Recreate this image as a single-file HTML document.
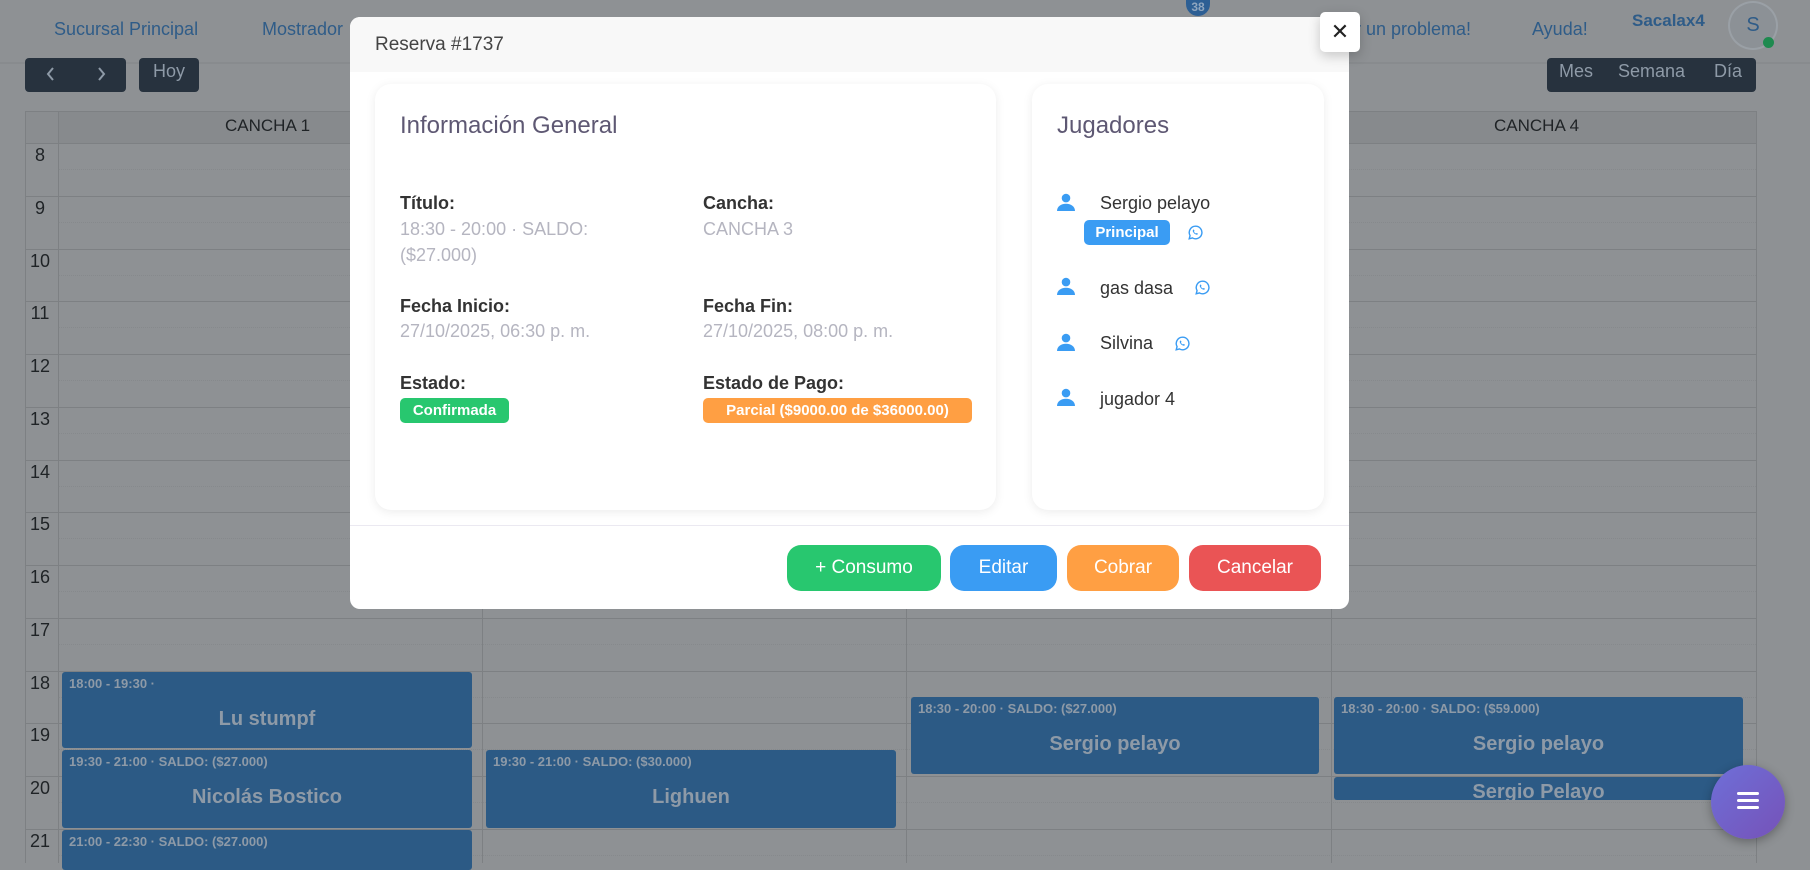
<!DOCTYPE html>
<html><head><meta charset="utf-8"><style>
*{margin:0;padding:0;box-sizing:border-box}
body{width:1810px;height:863px;overflow:hidden;background:#8e9194;font-family:"Liberation Sans",sans-serif;position:relative;color:#1f2326}
.a{position:absolute;white-space:nowrap}
.nav{color:#2f5c88;font-size:18px}
.hr{position:absolute;left:25px;width:1731px;height:1px;background:#7d8083}
.hh{position:absolute;left:58px;width:1698px;border-top:1px dotted #80838688}
.vl{position:absolute;top:111px;bottom:0;width:1px;background:#7d8083}
.hn{position:absolute;left:25px;width:30px;text-align:center;font-size:18px;color:#1f2326}
.ev{position:absolute;background:#2c5a85;border-radius:3px;color:#8e9aa7}
.ev .t{position:absolute;left:7px;top:4px;font-size:13px;font-weight:bold}
.ev .n{position:absolute;left:0;right:0;top:36px;text-align:center;font-size:20px;font-weight:bold}
.modal{position:absolute;left:350px;top:17px;width:999px;height:592px;background:#fff;border-radius:10px;overflow:hidden}
.card{position:absolute;background:#fff;border-radius:16px;box-shadow:0 2px 10px rgba(0,0,0,.08)}
.lb{position:absolute;font-size:18px;color:#333;font-weight:bold}
.vv{position:absolute;font-size:18px;color:#b5b5c0;line-height:26px}
.bd{position:absolute;color:#fff;font-weight:bold;font-size:15px;border-radius:5px;text-align:center;line-height:25px}
.btn{position:absolute;top:528px;height:46px;border-radius:14px;color:#fff;font-size:19px;text-align:center;line-height:46px}
.pn{position:absolute;left:1100px;font-size:18px;color:#333}
.tb{position:absolute;top:61px;color:#8e9aa7;font-size:18px}
</style></head><body>
<!-- nav -->
<div class="a nav" style="left:54px;top:19px">Sucursal Principal</div>
<div class="a nav" style="left:262px;top:19px">Mostrador</div>
<div class="a nav" style="left:1355px;top:19px">r un problema!</div>
<div class="a nav" style="left:1532px;top:19px">Ayuda!</div>
<div class="a" style="left:1632px;top:11px;font-size:17px;font-weight:bold;color:#2f5c88">Sacalax4</div>
<div class="a" style="left:1186px;top:0;width:24px;height:16px;border-radius:0 0 12px 12px;background:#2d5f94;color:#8fa6bf;font-size:12px;font-weight:bold;text-align:center;line-height:14px">38</div>
<div class="a" style="left:1728px;top:1px;width:50px;height:49px;border-radius:50%;background:#8c9196;border:2px solid #9aa0a6;color:#2f5c88;font-size:20px;text-align:center;line-height:45px">S</div>
<div class="a" style="left:1763px;top:37px;width:11px;height:11px;border-radius:50%;background:#1e8a4f"></div>
<div class="a" style="left:0;top:62px;width:1810px;height:2px;background:#888b8e"></div>
<!-- toolbar -->
<div class="a" style="left:25px;top:58px;width:101px;height:34px;background:#27323e;border-radius:4px"></div>
<svg class="a" style="left:44px;top:65px" width="14" height="18" viewBox="0 0 14 18"><path d="M9 3L4 9l5 6" fill="none" stroke="#8e9aa7" stroke-width="2"/></svg>
<svg class="a" style="left:94px;top:65px" width="14" height="18" viewBox="0 0 14 18"><path d="M5 3l5 6-5 6" fill="none" stroke="#8e9aa7" stroke-width="2"/></svg>
<div class="a" style="left:139px;top:58px;width:60px;height:34px;background:#27323e;border-radius:4px;color:#8e9aa7;font-size:18px;text-align:center;line-height:26px">Hoy</div>
<div class="a" style="left:1547px;top:58px;width:209px;height:34px;background:#27323e;border-radius:4px"></div>
<div class="tb" style="left:1559px">Mes</div><div class="tb" style="left:1618px">Semana</div><div class="tb" style="left:1714px">Día</div>
<!-- grid -->
<div class="a" style="left:58px;top:111px;width:1698px;height:32px;background:#878a8d"></div>
<div class="a" style="left:25px;top:111px;width:33px;height:32px;background:#8a8d90"></div>
<div class="a" style="left:225px;top:116px;font-size:17px">CANCHA 1</div>
<div class="a" style="left:1494px;top:116px;font-size:17px">CANCHA 4</div>
<div class="hr" style="top:111px"></div>
<div class="vl" style="left:25px"></div><div class="vl" style="left:58px"></div><div class="vl" style="left:482px"></div><div class="vl" style="left:906px"></div><div class="vl" style="left:1331px"></div><div class="vl" style="left:1756px"></div>
<div class="hr" style="top:143px"></div><div class="hh" style="top:169px"></div><div class="hn" style="top:145px">8</div>
<div class="hr" style="top:196px"></div><div class="hh" style="top:222px"></div><div class="hn" style="top:198px">9</div>
<div class="hr" style="top:249px"></div><div class="hh" style="top:275px"></div><div class="hn" style="top:251px">10</div>
<div class="hr" style="top:301px"></div><div class="hh" style="top:327px"></div><div class="hn" style="top:303px">11</div>
<div class="hr" style="top:354px"></div><div class="hh" style="top:380px"></div><div class="hn" style="top:356px">12</div>
<div class="hr" style="top:407px"></div><div class="hh" style="top:433px"></div><div class="hn" style="top:409px">13</div>
<div class="hr" style="top:460px"></div><div class="hh" style="top:486px"></div><div class="hn" style="top:462px">14</div>
<div class="hr" style="top:512px"></div><div class="hh" style="top:538px"></div><div class="hn" style="top:514px">15</div>
<div class="hr" style="top:565px"></div><div class="hh" style="top:591px"></div><div class="hn" style="top:567px">16</div>
<div class="hr" style="top:618px"></div><div class="hh" style="top:644px"></div><div class="hn" style="top:620px">17</div>
<div class="hr" style="top:671px"></div><div class="hh" style="top:697px"></div><div class="hn" style="top:673px">18</div>
<div class="hr" style="top:723px"></div><div class="hh" style="top:749px"></div><div class="hn" style="top:725px">19</div>
<div class="hr" style="top:776px"></div><div class="hh" style="top:802px"></div><div class="hn" style="top:778px">20</div>
<div class="hr" style="top:829px"></div><div class="hh" style="top:855px"></div><div class="hn" style="top:831px">21</div>
<!-- events -->
<div class="ev" style="left:62px;top:672px;width:410px;height:76px"><div class="t">18:00 - 19:30 ·</div><div class="n">Lu stumpf</div></div>
<div class="ev" style="left:62px;top:750px;width:410px;height:78px"><div class="t">19:30 - 21:00 · SALDO: ($27.000)</div><div class="n">Nicolás Bostico</div></div>
<div class="ev" style="left:62px;top:830px;width:410px;height:40px"><div class="t">21:00 - 22:30 · SALDO: ($27.000)</div></div>
<div class="ev" style="left:486px;top:750px;width:410px;height:78px"><div class="t">19:30 - 21:00 · SALDO: ($30.000)</div><div class="n">Lighuen</div></div>
<div class="ev" style="left:911px;top:697px;width:408px;height:77px"><div class="t">18:30 - 20:00 · SALDO: ($27.000)</div><div class="n">Sergio pelayo</div></div>
<div class="ev" style="left:1334px;top:697px;width:409px;height:77px"><div class="t">18:30 - 20:00 · SALDO: ($59.000)</div><div class="n">Sergio pelayo</div></div>
<div class="ev" style="left:1334px;top:777px;width:409px;height:23px;overflow:hidden"><div class="n" style="top:4px">Sergio Pelayo</div></div>
<!-- fab -->
<div class="a" style="left:1711px;top:765px;width:74px;height:74px;border-radius:50%;background:linear-gradient(135deg,#6e6fd8,#7652b8);box-shadow:0 3px 10px rgba(0,0,0,.3)"></div>
<div class="a" style="left:1737px;top:792px;width:22px;height:3px;background:#fff;border-radius:2px;box-shadow:0 7px 0 #fff,0 14px 0 #fff"></div>
<!-- modal -->
<div class="modal">
 <div class="a" style="left:0;top:0;width:999px;height:55px;background:#f8f8f8"></div>
 <div class="a" style="left:25px;top:17px;font-size:19px;color:#444">Reserva #1737</div>
 <div class="card" style="left:25px;top:67px;width:621px;height:426px">
  <div class="a" style="left:25px;top:28px;font-size:24px;color:#5e5873">Información General</div>
 </div>
 <div class="card" style="left:682px;top:67px;width:292px;height:426px">
  <div class="a" style="left:25px;top:28px;font-size:24px;color:#5e5873">Jugadores</div>
 </div>
 <div class="lb" style="left:50px;top:176px">Título:</div>
 <div class="vv" style="left:50px;top:199px">18:30 - 20:00 · SALDO:<br>($27.000)</div>
 <div class="lb" style="left:353px;top:176px">Cancha:</div>
 <div class="vv" style="left:353px;top:199px">CANCHA 3</div>
 <div class="lb" style="left:50px;top:279px">Fecha Inicio:</div>
 <div class="vv" style="left:50px;top:301px">27/10/2025, 06:30 p. m.</div>
 <div class="lb" style="left:353px;top:279px">Fecha Fin:</div>
 <div class="vv" style="left:353px;top:301px">27/10/2025, 08:00 p. m.</div>
 <div class="lb" style="left:50px;top:356px">Estado:</div>
 <div class="bd" style="left:50px;top:381px;width:109px;background:#28c76f">Confirmada</div>
 <div class="lb" style="left:353px;top:356px">Estado de Pago:</div>
 <div class="bd" style="left:353px;top:381px;width:269px;background:#ff9f43">Parcial ($9000.00 de $36000.00)</div>
 <div class="a" style="left:0;top:508px;width:999px;height:1px;background:#ebe9f1"></div>
 <div class="btn" style="left:437px;width:154px;background:#28c76f">+ Consumo</div>
 <div class="btn" style="left:600px;width:107px;background:#3a9cf3">Editar</div>
 <div class="btn" style="left:717px;width:112px;background:#ff9f43">Cobrar</div>
 <div class="btn" style="left:839px;width:132px;background:#ea5455">Cancelar</div>
</div>
<!-- players -->
<svg class="a" style="left:1057px;top:193px" width="18" height="18" viewBox="0 0 16 16"><circle cx="8" cy="4.5" r="3.8" fill="#3a9cf3"/><path d="M0 16c0-4 3.5-6.5 8-6.5s8 2.5 8 6.5z" fill="#3a9cf3"/></svg>
<svg class="a" style="left:1057px;top:277px" width="18" height="18" viewBox="0 0 16 16"><circle cx="8" cy="4.5" r="3.8" fill="#3a9cf3"/><path d="M0 16c0-4 3.5-6.5 8-6.5s8 2.5 8 6.5z" fill="#3a9cf3"/></svg>
<svg class="a" style="left:1057px;top:333px" width="18" height="18" viewBox="0 0 16 16"><circle cx="8" cy="4.5" r="3.8" fill="#3a9cf3"/><path d="M0 16c0-4 3.5-6.5 8-6.5s8 2.5 8 6.5z" fill="#3a9cf3"/></svg>
<svg class="a" style="left:1057px;top:388px" width="18" height="18" viewBox="0 0 16 16"><circle cx="8" cy="4.5" r="3.8" fill="#3a9cf3"/><path d="M0 16c0-4 3.5-6.5 8-6.5s8 2.5 8 6.5z" fill="#3a9cf3"/></svg>
<div class="pn" style="top:193px">Sergio pelayo</div>
<div class="bd" style="left:1084px;top:220px;width:86px;background:#3a9cf3">Principal</div>
<div class="pn" style="top:278px">gas dasa</div>
<div class="pn" style="top:333px">Silvina</div>
<div class="pn" style="top:389px">jugador 4</div>
<svg class="a" style="left:1188px;top:225px" width="15" height="15" viewBox="0 0 16 16"><path d="M8 1.3a6.7 6.7 0 0 0-5.8 10L1.3 14.7l3.5-.9A6.7 6.7 0 1 0 8 1.3z" fill="none" stroke="#3a9cf3" stroke-width="1.5"/><path d="M5.6 5c.3-.3.7-.2.8.1l.5 1.2-.5.7c.4.9 1.1 1.6 2 2l.7-.5 1.2.5c.3.1.4.5.1.8-.6.7-1.5.7-2.6.1a6 6 0 0 1-2.3-2.3c-.6-1.1-.6-2 .1-2.6z" fill="#3a9cf3"/></svg>
<svg class="a" style="left:1195px;top:280px" width="15" height="15" viewBox="0 0 16 16"><path d="M8 1.3a6.7 6.7 0 0 0-5.8 10L1.3 14.7l3.5-.9A6.7 6.7 0 1 0 8 1.3z" fill="none" stroke="#3a9cf3" stroke-width="1.5"/><path d="M5.6 5c.3-.3.7-.2.8.1l.5 1.2-.5.7c.4.9 1.1 1.6 2 2l.7-.5 1.2.5c.3.1.4.5.1.8-.6.7-1.5.7-2.6.1a6 6 0 0 1-2.3-2.3c-.6-1.1-.6-2 .1-2.6z" fill="#3a9cf3"/></svg>
<svg class="a" style="left:1175px;top:336px" width="15" height="15" viewBox="0 0 16 16"><path d="M8 1.3a6.7 6.7 0 0 0-5.8 10L1.3 14.7l3.5-.9A6.7 6.7 0 1 0 8 1.3z" fill="none" stroke="#3a9cf3" stroke-width="1.5"/><path d="M5.6 5c.3-.3.7-.2.8.1l.5 1.2-.5.7c.4.9 1.1 1.6 2 2l.7-.5 1.2.5c.3.1.4.5.1.8-.6.7-1.5.7-2.6.1a6 6 0 0 1-2.3-2.3c-.6-1.1-.6-2 .1-2.6z" fill="#3a9cf3"/></svg>
<!-- close -->
<div class="a" style="left:1320px;top:12px;width:40px;height:40px;background:#fff;border-radius:5px;box-shadow:0 4px 12px rgba(0,0,0,.2);text-align:center;line-height:40px;font-size:22px;color:#222">✕</div>
</body></html>
